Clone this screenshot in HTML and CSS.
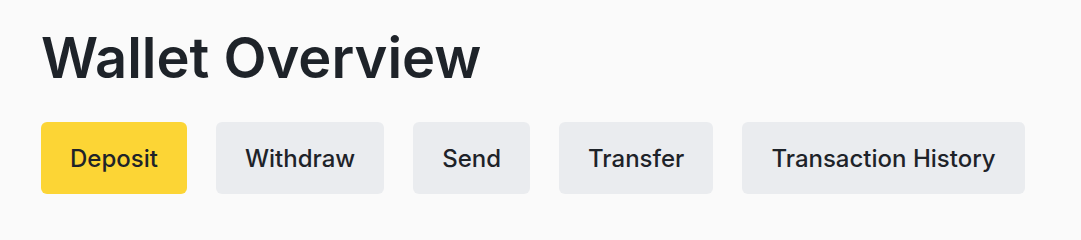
FILE: index.html
```html
<!DOCTYPE html>
<html lang="en">
<head>
<meta charset="utf-8">
<title>Wallet Overview</title>
<link rel="stylesheet" href="styles.css">
</head>
<body>
<main class="page">
  <h1 class="title">Wallet Overview</h1>
  <nav class="actions">
    <button class="btn btn-primary">Deposit</button>
    <button class="btn">Withdraw</button>
    <button class="btn">Send</button>
    <button class="btn">Transfer</button>
    <button class="btn">Transaction History</button>
  </nav>
</main>
</body>
</html>
```
FILE: styles.css
```css
html, body {
  margin: 0;
  background: #fafafa;
}
.page {
  padding: 26px 41px 0;
  font-family: Inter, "Noto Sans", sans-serif;
  color: #1e2329;
}
.title {
  margin: 0;
  font-size: 56px;
  line-height: 64px;
  font-weight: 600;
  letter-spacing: 0;
}
.actions {
  display: flex;
  gap: 29px;
  margin-top: 32px;
}
.btn {
  height: 72px;
  padding: 0 29px;
  border: none;
  border-radius: 6px;
  background: #eaecef;
  color: #1e2329;
  font-family: inherit;
  font-size: 24px;
  font-weight: 500;
}
.btn-primary {
  background: #fcd535;
}
```
